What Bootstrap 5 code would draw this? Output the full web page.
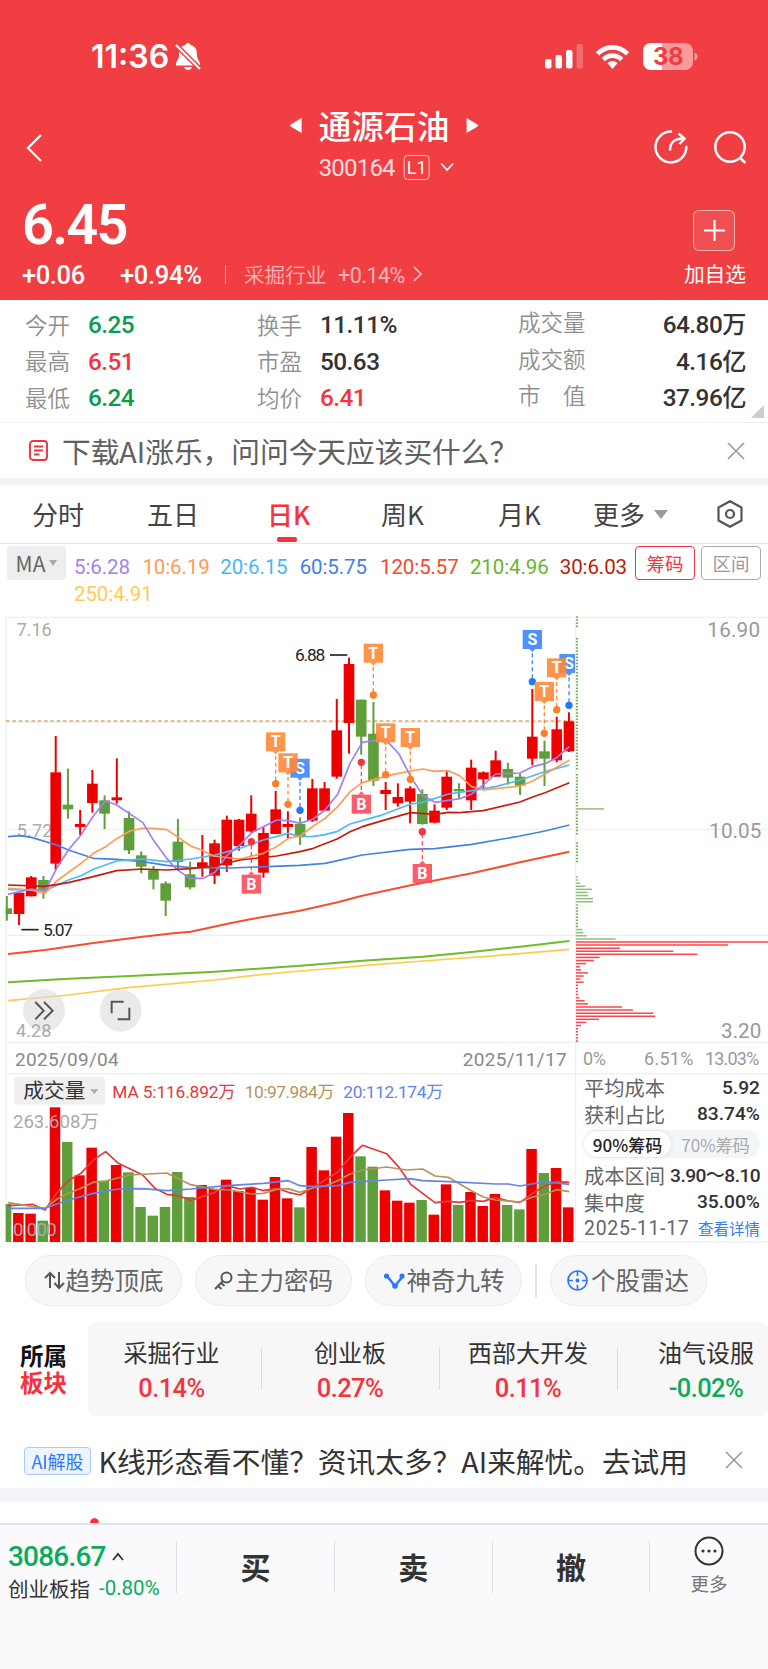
<!DOCTYPE html>
<html lang="zh-CN">
<head>
<meta charset="utf-8">
<meta name="viewport" content="width=device-width, initial-scale=1">
<title>通源石油 300164</title>
<link href="https://cdn.jsdelivr.net/npm/bootstrap@5.3.0/dist/css/bootstrap.min.css" rel="stylesheet">
<style>
:root{--up:#f5333f;--down:#0a9a50;--ink:#333;--muted:#8f8f8f}
body{width:768px;height:1669px;overflow:hidden;background:#fff;color:var(--ink);font-family:"Noto Sans CJK SC",sans-serif;line-height:1;font-weight:400}
svg{display:block;flex:none;overflow:visible}
.num{font-family:Roboto,"Noto Sans CJK SC",sans-serif}
.up{color:var(--up)}.down{color:var(--down)}
.nw{white-space:nowrap}
.hero{height:300px;background:#f03e42;color:#fff}
.statusbar{height:95px;padding:18px 68px 0 91px}
.clock{font:600 32px/1 Inter,sans-serif;letter-spacing:0}
.titlebar{height:95px;padding:0 22px 0 26px}
.stock-name{font-size:32.7px;font-weight:500;line-height:40px}
.l1{width:26px;height:25px;border:1px solid #ffffffb0;border-radius:4px;font:18px/23px Roboto;text-align:center}
.price{font-size:56px;font-weight:600;letter-spacing:-1.8px}
.plusbox{width:42px;height:41px;border:1.5px solid #ffffff90;border-radius:6px;background:#ffffff18}
.chg{height:50px;padding:1px 22px 0 22px}
.stats{height:123px;padding-top:7px;border-bottom:1.5px solid #eee}
.stats .line{height:36.6px;display:grid;grid-template-columns:63px 169px 63px 198px 1fr;padding:0 22px 0 25px;align-items:center}
.stats .lab{font-size:22.5px;color:var(--muted);font-weight:350;margin-top:-3px}
.stats .num{font-size:24.3px;font-weight:500;letter-spacing:-.5px}
.tip{height:55px;padding:2px 24px 0 29px;font-size:28.7px;color:#606060}
.band{background:#f2f4f8}
.tabs{height:59px;border-bottom:1.5px solid #e6e6e6;font-size:26px;color:#444;padding:0 25px 0 32px}
.tabs span{display:block;line-height:40px}
.tab-on{color:var(--up);font-weight:500;left:-1px}
.tab-on::after{content:"";position:absolute;left:10px;bottom:-8px;width:20px;height:5px;border-radius:2px;background:var(--up)}
.ma{height:66px;padding:2px 7px 0}
.ma-btn{width:59px;height:34px;background:#eee;border-radius:4px;font-size:21px;color:#666}
.ma-list{width:561px;padding:8px 0 0 8px;font-size:20.5px;font-weight:400;line-height:26.6px;letter-spacing:-.1px}
.outl{height:34px;border:1.5px solid #aaa;border-radius:4px;font-size:18.5px;color:#999}
.board{height:633px}
.cost{left:576px;top:464px;width:192px;height:168px;padding:0 8px;color:#666;font-size:20.3px}
.cost .r{height:26.5px}
.cost .num{font-size:19.2px;font-weight:500;color:#333}
.pill2{height:28px;border-radius:14px;background:#f3f6f9;margin:3px 0 4px;font-size:17px}
.pill2 b{width:87px;height:26px;border-radius:13px;background:#fff;color:#222;font-weight:500;box-shadow:0 0 4px #0002}
.chips{height:79px;padding:12px 25px 0}
.chipbtn{width:157px;height:51px;border:1.5px solid #ebebeb;border-radius:26px;background:#f7f7f7;font-size:24.5px;color:#666}
.sector{height:94px}
.sector-lab{width:88px;padding-left:20px;font-size:23.5px;font-weight:700;line-height:27px;color:#111}
.sector-box{background:#f7f7f7;border-radius:8px;width:680px;overflow:hidden}
.sector-box>div{flex:0 0 178px;width:178px;position:relative;margin-top:-1px}
.sector-box>div:first-child{flex-basis:173px;padding-right:6px}
.sector-box>div+div::before{content:"";position:absolute;left:0;top:27px;height:42px;border-left:1.5px solid #ddd}
.sector-box .nm{font-size:24px;line-height:30px;color:#333}
.sector-box .pc{font-size:25.5px;font-weight:500;line-height:30px;margin-top:6px;letter-spacing:-.6px}
.ai{height:63px;padding:9px 26px 0 24px;font-size:28.7px;color:#333}
.ai-tag{width:67px;height:28px;border:1.5px solid #a9caff;border-radius:4px;background:#eef5ff;color:#2a78ff;font-size:18px}
.dock{height:146px;background:#fafafc;border-top:2px solid #e2e4ec}
.dock>div{height:52px;margin-top:16px}
.dock .act{width:157.8px;border-left:1.5px solid #dedee4;font-size:30px;font-weight:700;padding-bottom:3px}
</style>
</head>
<body>
<header class="hero">
  <div class="statusbar d-flex align-items-center">
    <span class="clock" style="width:84px">11:36</span>
    <svg width="26" height="27" viewBox="0 0 26 27"><path fill="#fff" d="M13 0q2 0 3 2.200c5 1.300 6 5 6 9.800 0 4 2.500 6 3 8.500v2H1v-2c.5-2.500 3-4.500 3-8.500 0-5 1-8.500 6-9.800Q11 0 13 0zM9 24h8q-1 3-4 3t-4-3z"/><path stroke="#f03e42" stroke-width="5" d="M0 1l26 26"/><path stroke="#fff" stroke-width="2.200" d="M1 2l24 24"/></svg>
    <div class="ms-auto d-flex align-items-center">
      <svg width="38" height="25" viewBox="0 0 38 25" fill="#fff"><rect y="15" width="6.500" height="9.500" rx="2"/><rect x="10.500" y="11" width="6.500" height="13.500" rx="2"/><rect x="21" y="6" width="6.500" height="18.500" rx="2"/><rect x="31.500" y="0" width="6.500" height="24.500" rx="2" opacity=".25"/></svg>
      <svg style="margin-left:13px" width="33" height="24" viewBox="0 0 33 24"><g fill="none" stroke="#fff" stroke-width="4.600"><path d="M1.500 8.800Q8 2.400 16.500 2.400T31.500 8.800"/><path d="M7.300 14.600Q11 10.600 16.500 10.600T25.700 14.600"/></g><path fill="#fff" d="M11.400 18q5-4 10.200 0L16.500 24z"/></svg>
      <svg style="margin-left:14px" width="57" height="28" viewBox="0 0 57 28"><clipPath id="bat"><rect width="50" height="27" rx="8"/></clipPath><g clip-path="url(#bat)"><rect width="50" height="27" fill="#f99a9d"/><rect width="19" height="27" fill="#fff"/></g><path d="M51.500 9.500q3 1 3 4t-3 4z" fill="#f99a9d"/><text x="25" y="22" text-anchor="middle" font-family="Inter" font-weight="700" font-size="24" letter-spacing="-.5" fill="#ee3d43">38</text></svg>
    </div>
  </div>
  <div class="titlebar d-flex align-items-center justify-content-between position-relative">
    <svg style="margin-top:10px" width="16" height="28" viewBox="0 0 16 28"><path d="M15 1L2 14l13 13" fill="none" stroke="#fff" stroke-width="2.300"/></svg>
    <div class="position-absolute start-50 translate-middle-x top-0" style="padding-top:10px">
      <div class="d-flex align-items-center justify-content-center" style="gap:17px">
        <svg width="12" height="15"><path d="M12 0v15L1 8.500q-1-1 0-2z" fill="#fff"/></svg><span class="stock-name">通源石油</span><svg width="12" height="15"><path d="M0 0v15L11 8.500q1-1 0-2z" fill="#fff"/></svg>
      </div>
      <div class="d-flex align-items-center" style="margin:9px 0 0 29px">
        <span class="num" style="font-size:24px;letter-spacing:-.8px;opacity:.82;width:85px;padding-top:2px">300164</span><span class="l1">L1</span>
        <svg style="margin-left:11px" width="13" height="8"><path d="M.5.500l6 6.500 6-6.500" fill="none" stroke="#fff" stroke-width="1.600"/></svg>
      </div>
    </div>
    <div class="d-flex" style="gap:26px;margin-top:8px">
      <svg width="34" height="34" viewBox="0 0 34 34" fill="none" stroke="#fff" stroke-width="2.500"><path d="M17 1.600A15.400 15.400 0 1 0 32.300 17" stroke-linecap="round"/><path d="M16 20.500C16 12 20 8.500 30 8.500M24.500 3.500l6 5-5 5.500"/></svg>
      <svg width="32" height="34" viewBox="0 0 32 34" fill="none" stroke="#fff" stroke-width="2.500"><circle cx="16" cy="17" r="14.700"/><path d="M25.500 27.500l6 5.500"/></svg>
    </div>
  </div>
  <div class="d-flex justify-content-between" style="height:60px;padding:7px 33px 0 22px">
    <span class="num price">6.45</span>
    <div class="plusbox d-flex align-items-center justify-content-center" style="margin-top:13px"><svg width="21" height="21"><path d="M10.500 0v21M0 10.500h21" stroke="#fff" stroke-width="2.200"/></svg></div>
  </div>
  <div class="chg d-flex align-items-center">
    <span class="num" style="font-size:25.500px;font-weight:500;width:98px;letter-spacing:-.4px">+0.06</span>
    <span class="num" style="font-size:25.500px;font-weight:500;width:105px;letter-spacing:-.3px">+0.94%</span>
    <span style="width:19px;height:19px;margin-top:-3px;border-left:1.500px solid #f99fa1"></span>
    <span style="font-size:20.600px;opacity:.62;width:94px;font-weight:350;margin-top:-3px">采掘行业</span>
    <span class="num" style="font-size:21.500px;opacity:.62;letter-spacing:-.5px;width:75px">+0.14%</span>
    <svg style="margin-top:-3px" width="9" height="16" opacity=".7"><path d="M1 1l7 7-7 7" fill="none" stroke="#fff" stroke-width="1.600"/></svg>
    <span class="ms-auto" style="font-size:20.700px;margin-top:-4px">加自选</span>
  </div>
</header>

<section class="stats position-relative">
  <div class="line"><span class="lab">今开</span><span class="num down">6.25</span><span class="lab">换手</span><span class="num">11.11%</span><div class="d-flex justify-content-between"><span class="lab">成交量</span><span class="num">64.80万</span></div></div>
  <div class="line"><span class="lab">最高</span><span class="num up">6.51</span><span class="lab">市盈</span><span class="num">50.63</span><div class="d-flex justify-content-between"><span class="lab">成交额</span><span class="num">4.16亿</span></div></div>
  <div class="line"><span class="lab">最低</span><span class="num down">6.24</span><span class="lab">均价</span><span class="num up">6.41</span><div class="d-flex justify-content-between"><span class="lab">市　值</span><span class="num">37.96亿</span></div></div>
  <svg class="position-absolute" style="right:4px;bottom:4px" width="13" height="13"><path d="M13 0v13H0z" fill="#ccc"/></svg>
</section>
<section class="tip d-flex align-items-center">
  <svg style="margin-top:-2px" width="19" height="21" viewBox="0 0 19 21" fill="none" stroke="#f5333f" stroke-width="1.900"><rect x="1" y="1" width="17" height="19" rx="3"/><path d="M5 6.500h9M5 10.500h9M5 14.500h5.500"/></svg>
  <span class="nw" style="margin-left:14px">下载AI涨乐，问问今天应该买什么？</span>
  <svg class="ms-auto" style="margin-top:-2px" width="16" height="16"><path d="M0 0l16 16M16 0L0 16" stroke="#999" stroke-width="1.600"/></svg>
</section>
<div class="band" style="height:7px"></div>

<nav class="tabs d-flex align-items-center">
  <span style="width:115px">分时</span><span style="width:121px">五日</span><div style="width:113px"><span class="tab-on position-relative d-inline-block">日K</span></div><span style="width:117px">周K</span><span style="width:95px">月K</span><span style="width:61px">更多</span>
  <svg width="14" height="9"><path d="M0 0h14L7 9z" fill="#999"/></svg>
  <svg class="ms-auto" width="26" height="28" viewBox="0 0 26 28" fill="none" stroke="#555" stroke-width="2.200"><path d="M13 1.200L24.500 7.500v13L13 26.800 1.500 20.500v-13z" stroke-linejoin="round"/><circle cx="13" cy="14" r="4"/></svg>
</nav>
<section class="ma d-flex align-items-start">
  <div class="ma-btn d-flex align-items-center justify-content-center gap-1">MA<svg width="8" height="6"><path d="M0 0h8L4 6z" fill="#aaa"/></svg></div>
  <div class="ma-list num nw">
    <div class="d-flex"><span style="width:68.500px;color:#a084f0">5:6.28</span><span style="width:78px;color:#ff9a55">10:6.19</span><span style="width:79.500px;color:#45b7f7">20:6.15</span><span style="width:80.500px;color:#4480e0">60:5.75</span><span style="width:90px;color:#f24a2c">120:5.57</span><span style="width:90px;color:#68b52c">210:4.96</span><span style="color:#c01a08">30:6.03</span></div>
    <div style="color:#ffcb55">250:4.91</div>
  </div>
  <div class="outl d-flex align-items-center justify-content-center" style="width:60px;margin-left:8px;border-color:#f5333f;color:#f5333f">筹码</div>
  <div class="outl d-flex align-items-center justify-content-center" style="width:60px;margin-left:6px">区间</div>
</section>

<section class="board position-relative">
  <svg id="chart" width="768" height="634" viewBox="0 0 2304 1902" font-family="Roboto,'Noto Sans CJK SC',sans-serif"></svg>
  <div class="cost position-absolute">
    <div class="r d-flex align-items-center justify-content-between"><span>平均成本</span><span class="num">5.92</span></div>
    <div class="r d-flex align-items-center justify-content-between"><span>获利占比</span><span class="num">83.74%</span></div>
    <div class="pill2 d-flex align-items-center"><b class="d-flex align-items-center justify-content-center">90%筹码</b><span class="m-auto" style="color:#aaa">70%筹码</span></div>
    <div class="r d-flex align-items-center justify-content-between nw"><span>成本区间</span><span class="num" style="letter-spacing:-.600px">3.90～8.10</span></div>
    <div class="r d-flex align-items-center justify-content-between"><span>集中度</span><span class="num">35.00%</span></div>
    <div class="r d-flex align-items-center justify-content-between nw"><span class="num" style="color:#666;font-weight:400;font-size:19.500px;letter-spacing:.7px">2025-11-17</span><span style="font-size:15.500px;color:#2f80f5">查看详情</span></div>
  </div>
</section>

<section class="chips d-flex">
  <div class="chipbtn d-flex align-items-center justify-content-center"><svg width="22" height="20" viewBox="0 0 22 20" fill="none" stroke="#555" stroke-width="2"><path d="M6 17V2M1 7l5-5 5 5M15 1v16M10.500 12l4.500 5 5-5"/></svg>趋势顶底</div>
  <div class="chipbtn d-flex align-items-center justify-content-center" style="margin-left:13px"><svg width="21" height="20" viewBox="0 0 21 20" fill="none" stroke="#555" stroke-width="2"><circle cx="12.500" cy="6.500" r="5"/><path d="M9 10l-8 8M4 15l3.500 3M7 12l3.500 3"/></svg>主力密码</div>
  <div class="chipbtn d-flex align-items-center justify-content-center" style="margin-left:13px"><svg width="24" height="20" viewBox="0 0 24 20" fill="#2a78ff"><path d="M4 5l8 10 8-10" fill="none" stroke="#2a78ff" stroke-width="2.400"/><circle cx="3.500" cy="5" r="2.600"/><circle cx="19" cy="5" r="2.600"/><circle cx="12" cy="15" r="2.800"/></svg>神奇九转</div>
  <div style="width:1.500px;height:33px;background:#e2e2e2;margin:9px 13px 0"></div>
  <div class="chipbtn d-flex align-items-center justify-content-center"><svg style="margin-right:3px" width="21" height="21" viewBox="0 0 21 21" fill="none" stroke="#2a78ff" stroke-width="1.700"><circle cx="10.500" cy="10.500" r="9.500"/><path d="M10.500 1v5M10.500 15v5M1 10.500h5M15 10.500h5"/><circle cx="10.500" cy="10.500" r="1.200" fill="#2a78ff"/></svg>个股雷达</div>
</section>

<section class="sector d-flex align-items-center">
  <div class="sector-lab">所属<br><span class="up">板块</span></div>
  <div class="sector-box d-flex h-100 text-center nw">
    <div class="pt-3"><div class="nm">采掘行业</div><div class="pc num up">0.14%</div></div>
    <div class="pt-3"><div class="nm">创业板</div><div class="pc num up">0.27%</div></div>
    <div class="pt-3"><div class="nm">西部大开发</div><div class="pc num up">0.11%</div></div>
    <div class="pt-3"><div class="nm">油气设服</div><div class="pc num" style="color:#0bab5c">-0.02%</div></div>
  </div>
</section>
<div style="height:9px"></div>
<section class="ai d-flex align-items-center">
  <span class="ai-tag d-flex align-items-center justify-content-center nw">AI解股</span>
  <span class="nw" style="margin-left:7.500px">K线形态看不懂？资讯太多？AI来解忧。去试用</span>
  <svg class="ms-auto" style="margin-top:-2px" width="16" height="16"><path d="M0 0l16 16M16 0L0 16" stroke="#999" stroke-width="1.600"/></svg>
</section>
<div class="band" style="height:14px"></div>
<div class="position-relative overflow-hidden" style="height:21px"><i class="position-absolute rounded-circle" style="left:90px;top:16px;width:9px;height:11px;background:#f5333f"></i></div>
<footer class="dock d-flex">
  <div style="width:176px;padding-left:8px">
    <div class="d-flex align-items-center" style="height:31px"><span class="num" style="font-size:28px;font-weight:500;color:#0bab5c;width:104px;letter-spacing:-.8px">3086.67</span><svg width="12" height="8"><path d="M1 7l5-6 5 6" fill="none" stroke="#333" stroke-width="1.800"/></svg></div>
    <div class="d-flex align-items-center nw" style="margin-top:6px;font-size:20.500px"><span style="width:91px">创业板指</span><span class="num" style="color:#0bab5c">-0.80%</span></div>
  </div>
  <div class="act d-flex align-items-center justify-content-center">买</div>
  <div class="act d-flex align-items-center justify-content-center">卖</div>
  <div class="act d-flex align-items-center justify-content-center">撤</div>
  <div class="act d-flex flex-column align-items-center" style="width:118px">
    <svg style="margin-top:-5px" width="30" height="30" viewBox="0 0 30 30"><circle cx="15" cy="15" r="13.500" fill="none" stroke="#333" stroke-width="2"/><g fill="#333"><circle cx="9" cy="15" r="1.600"/><circle cx="15" cy="15" r="1.600"/><circle cx="21" cy="15" r="1.600"/></g></svg>
    <span style="font-size:18.500px;font-weight:400;color:#777;margin-top:8px">更多</span>
  </div>
</footer>
<script>
// Chart units are thirds of a pixel.
const RED='#ee0000', GREEN='#5f9f3b', out=[];
const add=s=>out.push(s);
const line=(x1,y1,x2,y2,c,w=3,extra='')=>add(`<path d="M${x1} ${y1}L${x2} ${y2}" stroke="${c}" stroke-width="${w}" ${extra}/>`);
const poly=(pts,c,w=5)=>add(`<polyline points="${pts}" fill="none" stroke="${c}" stroke-width="${w}" stroke-linejoin="round"/>`);
// len fixes the drawn width of a label
const text=(s,x,y,size,c,len,w=400)=>add(`<text x="${x}" y="${y}" font-size="${size}" fill="${c}" font-weight="${w}" textLength="${len}">${s}</text>`);
const GRID='#efefef';
[22,337,658,976].forEach(y=>line(18,y,y==337?1728:2304,y,GRID,4));
line(18,1297,2304,1297,GRID,4);line(18,1391,2304,1391,GRID,4);line(18,1896,2304,1896,GRID,4);
line(18,22,18,1896,GRID,4);line(1727,22,1727,1896,GRID,4);
line(18,333,1727,333,'#d8ad6c',5,'stroke-dasharray="11 8"');
text('7.16',50,78,54,'#aaa',105);text('5.72',50,682,54,'#aaa',107);

// [high, top, bottom, low, rising]
const K=[[858,895,912,932,0],[848,848,912,945,1],[798,802,859,859,1],[798,810,843,866,0],[378,487,761,780,1],[476,584,598,626,0],[600,642,651,675,1],[480,521,579,608,1],[556,571,611,657,0],[445,562,571,581,1],[604,624,721,732,0],[724,736,770,790,0],[768,777,809,838,0],[814,820,872,918,0],[627,695,756,778,0],[755,793,832,838,0],[675,757,773,800,1],[689,700,797,822,1],[617,629,766,786,1],[627,629,708,722,1],[556,611,664,668,1],[652,669,788,803,1],[543,598,672,672,1],[604,642,651,684,1],[622,642,680,705,0],[507,535,632,636,1],[516,535,602,604,1],[267,361,500,506,1],[143,162,339,431,1],[269,269,380,434,0],[276,371,512,528,0],[516,540,552,600,1],[520,561,580,590,1],[529,535,575,640,1],[538,552,642,644,0],[583,602,638,640,1],[484,500,593,600,1],[520,537,544,565,0],[449,473,571,600,1],[484,487,508,538,1],[422,451,500,500,1],[458,477,503,524,0],[490,500,527,555,0],[237,380,446,466,1],[392,424,446,528,0],[320,358,451,457,1],[307,334,424,426,1]];
const V=[822,849,851,872,532,636,736,653,752,705,727,831,857,831,726,801,765,777,749,783,773,809,741,805,832,651,721,620,549,679,710,781,812,818,810,854,763,825,786,828,792,825,838,657,729,714,832];
K.forEach((k,i)=>{const x=20.500+36.660*i,c=k[4]?RED:GREEN,l=Math.max(17,x-16);
  line(x,k[0],x,k[3],c,6);
  add(`<rect x="${l}" y="${k[1]}" width="${x+16-l}" height="${k[2]-k[1]}" fill="${c}"/>`);
  const vx=18.600+36.660*i,vl=Math.max(17,vx-16);
  add(`<rect x="${vl}" y="${V[i]+960}" width="${vx+15.500-vl}" height="${936-V[i]}" fill="${c}"/>`);
});
poly('24,1172 205,1155 390,1132 645,1110 790,1093 900,1083 1013,1074 1087,1067 1268,1053 1450,1040 1708,1018','#ffcb4d');
poly('24,1117 205,1106 390,1098 645,1085 900,1067 1013,1058 1087,1052 1268,1040 1415,1026 1560,1010 1708,993','#6fbb2b',6);
poly('24,1032 135,1020 280,999 428,980 520,970 572,965 690,940 755,927 900,902 1013,877 1087,857 1232,826 1415,790 1560,757 1708,725','#f4502f',6);
poly('24,680 60,677 94,682 170,705 205,720 280,745 350,748 428,755 500,766 572,773 690,774 900,766 975,760 1013,752 1087,735 1230,718 1305,716 1415,703 1560,678 1635,663 1708,645','#4583e2');
poly('24,838 135,842 205,810 243,797 280,778 350,753 428,747 500,755 572,747 645,735 720,715 790,690 865,670 900,680 940,679 975,674 1013,664 1050,642 1140,617 1232,582 1268,577 1345,552 1415,542 1487,530 1560,510 1635,485 1708,465','#4cb9fb');
poly('24,835 94,840 135,850 170,813 243,760 280,730 317,710 350,686 390,663 425,655 460,655 500,659 535,682 572,708 605,720 640,738 720,747 790,730 830,710 865,685 900,678 940,648 975,625 1013,590 1050,545 1087,518 1180,493 1232,483 1268,477 1305,484 1345,482 1380,498 1415,530 1450,540 1560,528 1598,513 1635,492 1670,472 1708,451','#ff9b54');
poly('24,853 94,837 135,843 170,775 205,720 243,675 280,618 317,572 350,585 428,637 460,690 500,745 530,778 570,805 610,805 645,787 680,737 720,705 755,668 830,630 865,632 900,640 940,627 975,600 1013,553 1050,460 1087,397 1120,392 1160,392 1197,432 1232,500 1268,556 1305,577 1380,566 1415,552 1450,525 1487,492 1560,489 1598,470 1635,461 1670,443 1708,410','#9f80f4');
poly('24,825 135,829 205,818 280,800 350,782 428,777 500,780 572,776 645,768 720,750 830,738 900,725 940,715 1013,686 1050,665 1087,650 1160,628 1232,608 1305,613 1345,607 1380,608 1450,602 1560,576 1598,561 1635,548 1708,518','#c81c0a');
add('<g transform="translate(0 960)">');
poly('24,827 98,823 135,840 170,790 205,752 243,730 280,690 317,665 355,700 428,735 465,775 500,793 535,797 572,811 645,787 680,767 720,777 755,772 790,782 830,775 865,787 900,795 940,772 1013,727 1050,682 1087,646 1160,671 1197,712 1232,763 1305,818 1345,814 1380,817 1415,811 1450,814 1487,802 1525,813 1560,817 1598,790 1635,768 1670,755 1708,757','#e5383b');
poly('24,818 135,835 170,808 205,790 243,775 280,757 317,753 390,735 500,729 572,764 645,778 690,780 755,792 790,790 830,778 865,776 900,787 940,773 975,768 1013,752 1050,732 1087,720 1160,711 1220,720 1268,717 1305,738 1345,742 1415,783 1450,801 1487,810 1560,816 1598,801 1635,793 1670,779 1708,785','#b5935b');
poly('24,835 135,835 205,810 280,790 355,777 428,776 500,782 572,777 680,767 790,760 865,752 900,767 940,770 1013,767 1050,757 1160,750 1230,746 1268,752 1345,755 1487,762 1525,762 1560,768 1635,755 1708,763','#6384e8');
add('</g>');

// trade markers: letter, x, box centre, dot centre
add('<clipPath id="plot"><rect width="1725" height="1300"/></clipPath><g clip-path="url(#plot)">');
[['S',900,474,601],['T',827,395,521],['T',864,458,583],['T',1120,129,255],['T',1157,368,494],['T',1231,382,508],['B',1084,582,457],['B',1267,790,665],['B',754,822,695],['S',1597,88,215],['S',1707,160,286],['T',1633,244,370],['T',1670,173,299]].forEach(([t,x,b,d])=>{
  const c={T:'#ff8a38',S:'#3d86ff',B:'#fb4c5c'}[t],dot={T:'#ff7f24',S:'#2277ff',B:'#f5333f'}[t],s=d>b?1:-1;
  line(x,b+s*42,x,d,c,4,'stroke-dasharray="12 9"');
  add(`<g fill="${c}" opacity=".9"><path d="M${x-29} ${b-28}h58v57h-58z"/><path d="M${x-10} ${b+s*28}h20L${x} ${b+s*38}z"/></g><circle cx="${x}" cy="${d}" r="11" fill="${dot}"/><text x="${x}" y="${b+17}" font-size="48" font-weight="700" fill="#fff" text-anchor="middle">${t}</text>`);
});
add('</g>');
text('6.88',885,154,52,'#222',91);line(990,135,1042,135,'#222',5);
text('5.07',129,977,52,'#222',90);line(64,959,116,959,'#222',5);

// cost distribution
const H={62:84,84:6,85:6,86:12,87:28,88:48,89:35,90:37,91:51,92:51,93:7,101:19,102:22,103:32,104:119,105:576,106:456,107:132,108:292,109:364,110:71,111:54,112:30,113:12,114:15,115:36,116:23,117:13,118:23,123:10,124:26,125:36,126:138,127:171,128:232,129:238,130:69,131:31,132:15};
for(let k=0;k<138;k++){ if((k>3&&k<7)||k==50||(k>70&&k<73)||(k>79&&k<84)) continue;
  line(1728,21+9.285*k,1728+(H[k]||6),21+9.285*k,k<105?(H[k]?'#92bc80':'#75ad5c'):'#f8464c',4.500);}
text('16.90',2122,81,62,'#999',158);text('10.05',2128,683,62,'#999',156);text('3.20',2163,1285,62,'#999',121);
text('0%',1749,1365,54,'#999',69);text('6.51%',1932,1365,54,'#999',148);text('13.03%',2115,1365,54,'#999',163);
text('2025/09/04',45,1367,57,'#888',311);text('2025/11/17',1388,1367,57,'#888',312);

// floating round buttons
add('<g fill="#ddd" opacity=".6"><circle cx="132" cy="1201" r="63"/><circle cx="362" cy="1202" r="63"/></g><path d="M106 1176l25 26-25 26M132 1176l26 26-26 26M335 1210v-35h36M388 1193v35h-35" fill="none" stroke="#555" stroke-width="6"/>');
text('4.28',48,1282,54,'#aaa',106);

add('<rect x="42" y="1401" width="273" height="83" rx="10" fill="#efefef"/><path d="M271 1438h24l-12 14z" fill="#aaa"/>');
text('成交量',70,1464,62,'#333',186);
text('MA 5:116.892万',337,1463,52,'#e5383b',370);text('10:97.984万',734,1463,52,'#b5935b',270);text('20:112.174万',1030,1463,52,'#6384e8',300);
text('263.608万',39,1555,56,'#aaa',258);text('0.000',39,1877,56,'#aaa',131);
document.getElementById('chart').innerHTML=out.join('');
</script>
<script src="https://cdn.jsdelivr.net/npm/bootstrap@5.3.0/dist/js/bootstrap.bundle.min.js"></script>
</body>
</html>
